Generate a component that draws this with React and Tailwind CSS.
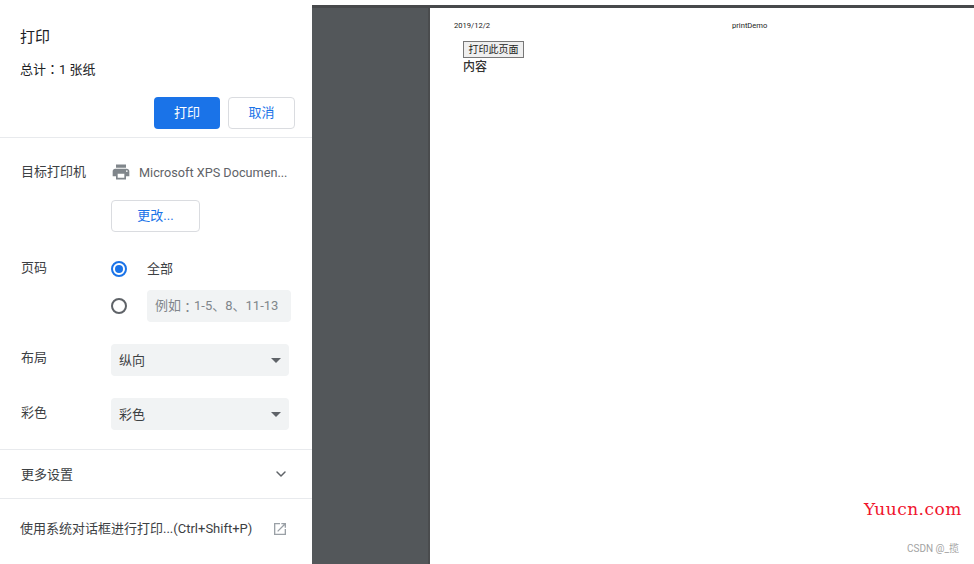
import { ChevronDown } from 'lucide-react'

function Row({ label, labelClass = '', className, children }) {
  return (
    <div className={`flex ${className}`}>
      <div className={`w-[111px] pl-[21px] shrink-0 text-[13px] leading-[20px] text-[#3c4043] ${labelClass}`}>{label}</div>
      <div className="flex-1 min-w-0">{children}</div>
    </div>
  )
}

function Colon() {
  return <span className="font-['Noto_Sans_CJK_TC',sans-serif] leading-none">：</span>
}

function Select({ value }) {
  return (
    <div className="w-[178px] h-8 rounded bg-[#f1f3f4] flex items-center justify-between pl-2 pr-[8px] text-[13px] text-[#3c4043]">
      <span className="pt-[1px]">{value}</span>
      <span className="w-0 h-0 border-x-[5px] border-t-[5px] border-x-transparent border-t-[#5f6368]" />
    </div>
  )
}

export default function App() {
  return (
    <div className="relative flex h-[564px] w-[974px] overflow-hidden bg-white font-['Roboto','Noto_Sans_CJK_SC',sans-serif]">
      <aside className="w-[312px] shrink-0 bg-white flex flex-col">
        <div className="h-[138px] border-b border-[#e8eaed] pl-5 pr-[17px] pt-[26px]">
          <h1 className="text-[15px] leading-[20px] text-[#202124] pt-[1px]">打印</h1>
          <p className="mt-[13px] h-5 overflow-hidden text-[13px] leading-[20px] text-[#202124]">总计<Colon />1 张纸</p>
          <div className="mt-[17px] flex justify-end gap-2">
            <button className="w-[66px] h-8 rounded bg-[#1a73e8] text-white text-[13px]">打印</button>
            <button className="w-[67px] h-8 rounded border border-[#dadce0] bg-white text-[#1a73e8] text-[13px]">取消</button>
          </div>
        </div>

        <div className="h-[312px] border-b border-[#e8eaed]">
          <Row label="目标打印机" className="mt-6">
            <div className="flex items-center h-5 text-[12.7px] text-[#5f6368]">
              <svg width="20" height="20" viewBox="0 0 24 24" fill="#80868b" className="shrink-0">
                <path d="M19 8H5c-1.66 0-3 1.34-3 3v6h4v4h12v-4h4v-6c0-1.66-1.34-3-3-3zm-3 11H8v-5h8v5zm3-7c-.55 0-1-.45-1-1s.45-1 1-1 1 .45 1 1-.45 1-1 1zm-1-9H6v4h12V3z" />
              </svg>
              <span className="ml-[8px] pt-[1px] whitespace-nowrap">Microsoft XPS Documen...</span>
            </div>
            <button className="mt-[18px] w-[89px] h-8 rounded border border-[#dadce0] bg-white text-[#1a73e8] text-[13px]">更改...</button>
          </Row>

          <Row label="页码" className="mt-[26px]">
            <div className="flex items-center h-5 mt-[1px]">
              <span className="w-4 h-4 rounded-full border-2 border-[#1a73e8] flex items-center justify-center">
                <span className="w-2 h-2 rounded-full bg-[#1a73e8]" />
              </span>
              <span className="ml-5 text-[13px] text-[#3c4043]">全部</span>
            </div>
            <div className="flex items-center mt-[11px]">
              <span className="w-4 h-4 rounded-full border-2 border-[#5f6368]" />
              <div className="ml-5 w-[144px] h-8 rounded bg-[#f1f3f4] pl-2 flex items-center text-[13px] text-[#80868b] whitespace-nowrap">例如<Colon />1-5、8、11-13</div>
            </div>
          </Row>

          <Row label="布局" labelClass="pt-[4px]" className="mt-[22px]">
            <Select value="纵向" />
          </Row>

          <Row label="彩色" labelClass="pt-[5px]" className="mt-[22px]">
            <Select value="彩色" />
          </Row>
        </div>

        <div className="h-[49px] border-b border-[#e8eaed] pl-[21px] pr-[23px] flex items-center justify-between text-[13px] text-[#3c4043]">
          <span className="pt-[2px]">更多设置</span>
          <ChevronDown size={16} strokeWidth={2.2} className="text-[#5f6368]" />
        </div>

        <div className="flex-1 pl-5 pr-[24px] pb-[6px] flex items-center justify-between text-[13px] text-[#3c4043] whitespace-nowrap">
          <span>使用系统对话框进行打印...(Ctrl+Shift+P)</span>
          <svg width="16" height="16" viewBox="0 0 24 24" fill="#9aa0a6" className="shrink-0">
            <path d="M19 19H5V5h7V3H3v18h18v-9h-2v7zM14 3v2h3.59l-9.83 9.83 1.41 1.41L19 6.41V10h2V3h-7z" />
          </svg>
        </div>
      </aside>

      <main className="flex-1 bg-[#53575a] pt-[8px] pl-[118px]">
        <div className="h-full bg-white">
          <div className="flex pt-[13px] pl-[24px] text-[7.6px] leading-[10px] text-[#222]">
            <span className="w-[278px]">2019/12/2</span>
            <span>printDemo</span>
          </div>
          <div className="pl-[33px] pt-[10px] text-[#333]">
            <button className="block w-[61px] h-[17px] border border-[#777] bg-[#efefef] text-[10px] leading-[15px] text-[#222]">打印此页面</button>
            <p className="mt-[1px] text-[12px] leading-[16px] font-medium">内容</p>
          </div>
        </div>
      </main>

      <div className="absolute left-[312px] top-0 right-0 h-[5px] bg-white" />
      <div className="absolute left-[312px] top-[5px] right-0 h-[3px] bg-[#47494b]" />
      <div className="absolute left-[428px] top-[8px] bottom-0 w-[2px] bg-[#4a4c4e]" />

      <span className="absolute left-[864px] top-[498px] text-[17px] leading-[22px] tracking-[0.5px] text-[#f0142d] font-['DejaVu_Serif',serif]">Yuucn.com</span>
      <span className="absolute left-[907px] top-[543px] text-[10px] leading-[12px] text-[#a3a3a3]">CSDN @_揽</span>
    </div>
  )
}
